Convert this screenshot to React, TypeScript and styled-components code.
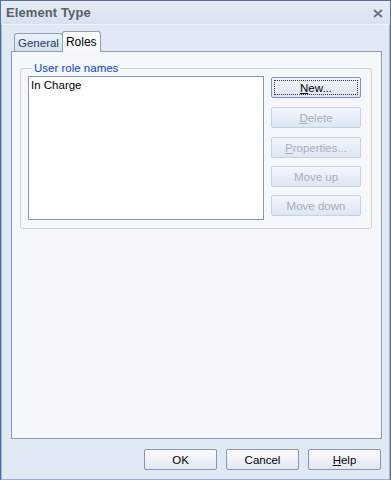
import React from "react";
import styled, { createGlobalStyle } from "styled-components";

const GlobalStyle = createGlobalStyle`
  html, body {
    margin: 0;
    padding: 0;
    background: #ffffff;
  }
  * {
    box-sizing: border-box;
  }
`;

const FONT = `"Liberation Sans", Arial, sans-serif`;

export default function App() {
  return (
    <>
      <GlobalStyle />
      <Frame>
        <TitleBar>
          <Title>Element Type</Title>
          <CloseButton aria-label="Close">
            <svg width="10" height="9" viewBox="0 0 10 9">
              <path d="M1 1 L9 8 M9 1 L1 8" stroke="#6f7885" strokeWidth="2" />
            </svg>
          </CloseButton>
        </TitleBar>
        <Client>
          <TabStrip>
            <Tab>General</Tab>
            <Tab $active>Roles</Tab>
          </TabStrip>
          <Panel>
            <Group>
              <Legend>User role names</Legend>
              <GroupRow>
                <ListBox>
                  <ListItem>In Charge</ListItem>
                </ListBox>
                <ButtonColumn>
                  <SideButton $focused $extra>
                    <u>N</u>ew...
                  </SideButton>
                  <SideButton disabled $extra>
                    <u>D</u>elete
                  </SideButton>
                  <SideButton disabled>
                    <u>P</u>roperties...
                  </SideButton>
                  <SideButton disabled>Move up</SideButton>
                  <SideButton disabled>Move down</SideButton>
                </ButtonColumn>
              </GroupRow>
            </Group>
          </Panel>
          <Footer>
            <DialogButton>OK</DialogButton>
            <DialogButton>Cancel</DialogButton>
            <DialogButton>
              <u>H</u>elp
            </DialogButton>
          </Footer>
        </Client>
      </Frame>
    </>
  );
}

const Frame = styled.div`
  width: 391px;
  height: 480px;
  display: flex;
  flex-direction: column;
  border: 1px solid #5b6f93;
  background: #dfe7f3;
  font-family: ${FONT};
  font-size: 11px;
  color: #000;
`;

const TitleBar = styled.div`
  height: 23px;
  flex: none;
  display: flex;
  align-items: center;
  justify-content: space-between;
  padding: 0 7px 0 5px;
  background: linear-gradient(#e6ecf5, #d9e2ee);
`;

const Title = styled.span`
  font-size: 13px;
  font-weight: bold;
  color: #575f6b;
  letter-spacing: 0.1px;
`;

const CloseButton = styled.span`
  display: flex;
  align-items: center;
  margin-top: 2px;
`;

const Client = styled.div`
  flex: 1;
  display: flex;
  flex-direction: column;
  padding: 6px 7px 9px 9px;
  border: 1px solid #9ab2d9;
  border-top: 1px solid #eef3fa;
  background: #e1e9f5;
`;

const TabStrip = styled.div`
  display: flex;
  align-items: flex-end;
  padding-left: 3px;
  height: 20px;
  flex: none;
`;

const Tab = styled.div<{ $active?: boolean }>`
  position: relative;
  z-index: ${(p) => (p.$active ? 2 : 1)};
  height: ${(p) => (p.$active ? "21px" : "18px")};
  margin-bottom: ${(p) => (p.$active ? "-1px" : "0")};
  margin-left: ${(p) => (p.$active ? "-1px" : "0")};
  padding: ${(p) => (p.$active ? "4px 3px 0 3px" : "3px 3px 0 3px")};
  border: 1px solid #919fb5;
  border-bottom: none;
  border-radius: 3px 3px 0 0;
  background: ${(p) =>
    p.$active ? "linear-gradient(#ffffff, #f5f8fd)" : "linear-gradient(#eef3fa, #d3dff0)"};
  color: ${(p) => (p.$active ? "#000" : "#1f3a6a")};
  font-size: ${(p) => (p.$active ? "12px" : "11.5px")};
  line-height: 13px;
`;

const Panel = styled.div`
  position: relative;
  z-index: 1;
  height: 388px;
  flex: none;
  padding: 10px 9px 0 8px;
  border: 1px solid #8d9cb3;
  background: #f4f7fc;
`;

const Group = styled.fieldset`
  margin: 0;
  height: 167px;
  padding: 1px 10px 9px 7px;
  border: 1px solid #d0d0c4;
  border-radius: 3px;
`;

const Legend = styled.legend`
  padding: 0 2px;
  margin-left: 4px;
  color: #0b46d3;
  font-size: 11.5px;
  line-height: 13px;
`;

const GroupRow = styled.div`
  display: flex;
  gap: 7px;
  align-items: flex-start;
`;

const ListBox = styled.div`
  width: 236px;
  height: 144px;
  padding: 2px 2px;
  border: 1px solid #7f9db9;
  background: #ffffff;
`;

const ListItem = styled.div`
  font-size: 11.5px;
  line-height: 13px;
`;

const ButtonColumn = styled.div`
  display: flex;
  flex-direction: column;
  gap: 8px;
  padding-top: 1px;
`;

const SideButton = styled.button<{ $focused?: boolean; $extra?: boolean }>`
  width: 90px;
  height: 21px;
  margin: 0 0 ${(p) => (p.$extra ? "1px" : "0")} 0;
  padding: 0;
  font-family: ${FONT};
  font-size: 11.5px;
  border: 1px solid ${(p) => (p.disabled ? "#c5d2e3" : "#7c91b5")};
  border-radius: 2px;
  background: linear-gradient(#f3f7fd, #dde6f3);
  color: ${(p) => (p.disabled ? "#a7aeb9" : "#000")};
  outline: ${(p) => (p.$focused ? "1px dotted #333" : "none")};
  outline-offset: -4px;
`;

const Footer = styled.div`
  display: flex;
  justify-content: flex-end;
  gap: 9px;
  margin-top: 10px;
  padding-right: 1px;
`;

const DialogButton = styled.button`
  width: 73px;
  height: 21px;
  padding: 0;
  font-family: ${FONT};
  font-size: 11.5px;
  color: #000;
  border: 1px solid #8797b3;
  border-radius: 2px;
  background: linear-gradient(#fbfcfe, #e2e8f1);
`;
